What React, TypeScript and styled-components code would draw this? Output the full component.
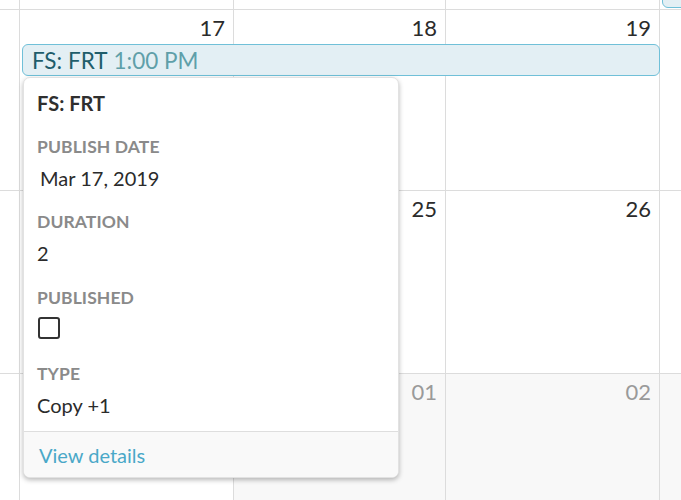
import React from "react";
import styled, { createGlobalStyle } from "styled-components";

const Global = createGlobalStyle`
  html, body { margin: 0; padding: 0; background: #fff; }
  body { font-family: Lato, "Noto Sans", sans-serif; color: #2b2b2b; }
`;

const Page = styled.div`
  position: relative;
  width: 681px;
  height: 500px;
  overflow: hidden;
  background: #fff;
`;

const Week = styled.div<{ $h: number }>`
  display: grid;
  grid-template-columns: 20px 214px 212px 214px 214px;
  grid-template-rows: ${(p) => p.$h}px;
  width: 874px;
`;

const Cell = styled.div<{ $col: number; $muted?: boolean; $last?: boolean }>`
  grid-column: ${(p) => p.$col};
  grid-row: 1;
  display: flex;
  flex-direction: column;
  align-items: flex-end;
  border-right: 1px solid #dcdcdc;
  border-bottom: ${(p) => (p.$last ? "none" : "1px solid #dcdcdc")};
  background: ${(p) => (p.$muted ? "#f8f8f8" : "#fff")};
  padding: 5px 8px 0 0;
  box-sizing: border-box;
  min-width: 0;
`;

const DayNum = styled.span<{ $muted?: boolean }>`
  font-size: 22px;
  line-height: 26px;
  color: ${(p) => (p.$muted ? "#9a9a9a" : "#2b2b2b")};
`;

const EventBar = styled.div<{ $cols: string; $top?: boolean }>`
  grid-column: ${(p) => p.$cols};
  grid-row: 1;
  align-self: ${(p) => (p.$top ? "end" : "start")};
  margin: ${(p) => (p.$top ? "0 0 2px 2px" : "34px 0 0 2px")};
  height: 32px;
  box-sizing: border-box;
  background: #e3eff4;
  border: 1px solid #70c0d8;
  border-radius: 6px;
  display: flex;
  align-items: center;
  padding-left: 9px;
  font-size: 22.5px;
  white-space: nowrap;
  overflow: hidden;
  z-index: 1;
`;

const EventTitle = styled.span`
  color: #1f5d6b;
`;

const EventTime = styled.span`
  color: #5f9fa9;
  margin-left: 6px;
`;

const Popover = styled.div`
  position: absolute;
  left: 23px;
  top: 77px;
  width: 376px;
  background: #fff;
  border: 1px solid #e2e2e2;
  border-radius: 7px;
  box-shadow: 0 2px 5px rgba(0, 0, 0, 0.28);
  overflow: hidden;
  box-sizing: border-box;
  z-index: 2;
`;

const PopBody = styled.div`
  display: flex;
  flex-direction: column;
  padding: 13px 14px 14px 13px;
`;

const PopTitle = styled.div`
  font-size: 20px;
  font-weight: 700;
  line-height: 24px;
  color: #2f2f2f;
`;

const Field = styled.div<{ $gap: number }>`
  display: flex;
  flex-direction: column;
  align-items: flex-start;
  margin-top: ${(p) => p.$gap}px;
`;

const Label = styled.div`
  font-size: 17.5px;
  font-weight: 700;
  line-height: 24px;
  color: #8a8a8a;
  text-transform: uppercase;
  letter-spacing: 0.1px;
`;

const Value = styled.div<{ $indent?: number }>`
  font-size: 20px;
  line-height: 24px;
  color: #2b2b2b;
  margin-top: 7px;
  padding-left: ${(p) => p.$indent ?? 0}px;
`;

const CheckBox = styled.div`
  width: 22px;
  height: 22px;
  box-sizing: border-box;
  border: 2.5px solid #333;
  border-radius: 3px;
  margin: 7px 0 0 1px;
`;

const PopFooter = styled.div`
  background: #f9f9f9;
  border-top: 1px solid #dedede;
  height: 45px;
  display: flex;
  align-items: center;
  padding-left: 15px;
`;

const DetailsLink = styled.a`
  font-size: 20px;
  color: #4aa8c8;
  text-decoration: none;
  cursor: pointer;
`;

const weeks = [
  { h: 10, days: ["", "", "", "", ""], muted: [false, false, false, false, false] },
  { h: 181, days: ["", "17", "18", "19", ""], muted: [false, false, false, false, false] },
  { h: 183, days: ["", "24", "25", "26", ""], muted: [false, false, false, false, false] },
  { h: 126, days: ["", "31", "01", "02", ""], muted: [false, false, true, true, true] },
];

export default function App() {
  return (
    <>
      <Global />
      <Page>
        {weeks.map((w, wi) => (
          <Week key={wi} $h={w.h}>
            {w.days.map((d, i) => (
              <Cell key={i} $col={i + 1} $muted={w.muted[i]} $last={wi === weeks.length - 1}>
                {d && <DayNum $muted={w.muted[i]}>{d}</DayNum>}
              </Cell>
            ))}
            {wi === 0 && <EventBar $cols="5 / 6" $top />}
            {wi === 1 && (
              <EventBar $cols="2 / 5">
                <EventTitle>FS: FRT</EventTitle>
                <EventTime>1:00 PM</EventTime>
              </EventBar>
            )}
          </Week>
        ))}
        <Popover>
          <PopBody>
            <PopTitle>FS: FRT</PopTitle>
            <Field $gap={20}>
              <Label>Publish date</Label>
              <Value $indent={3}>Mar 17, 2019</Value>
            </Field>
            <Field $gap={20}>
              <Label>Duration</Label>
              <Value>2</Value>
            </Field>
            <Field $gap={21}>
              <Label>Published</Label>
              <CheckBox />
            </Field>
            <Field $gap={23}>
              <Label>Type</Label>
              <Value>Copy +1</Value>
            </Field>
          </PopBody>
          <PopFooter>
            <DetailsLink>View details</DetailsLink>
          </PopFooter>
        </Popover>
      </Page>
    </>
  );
}
